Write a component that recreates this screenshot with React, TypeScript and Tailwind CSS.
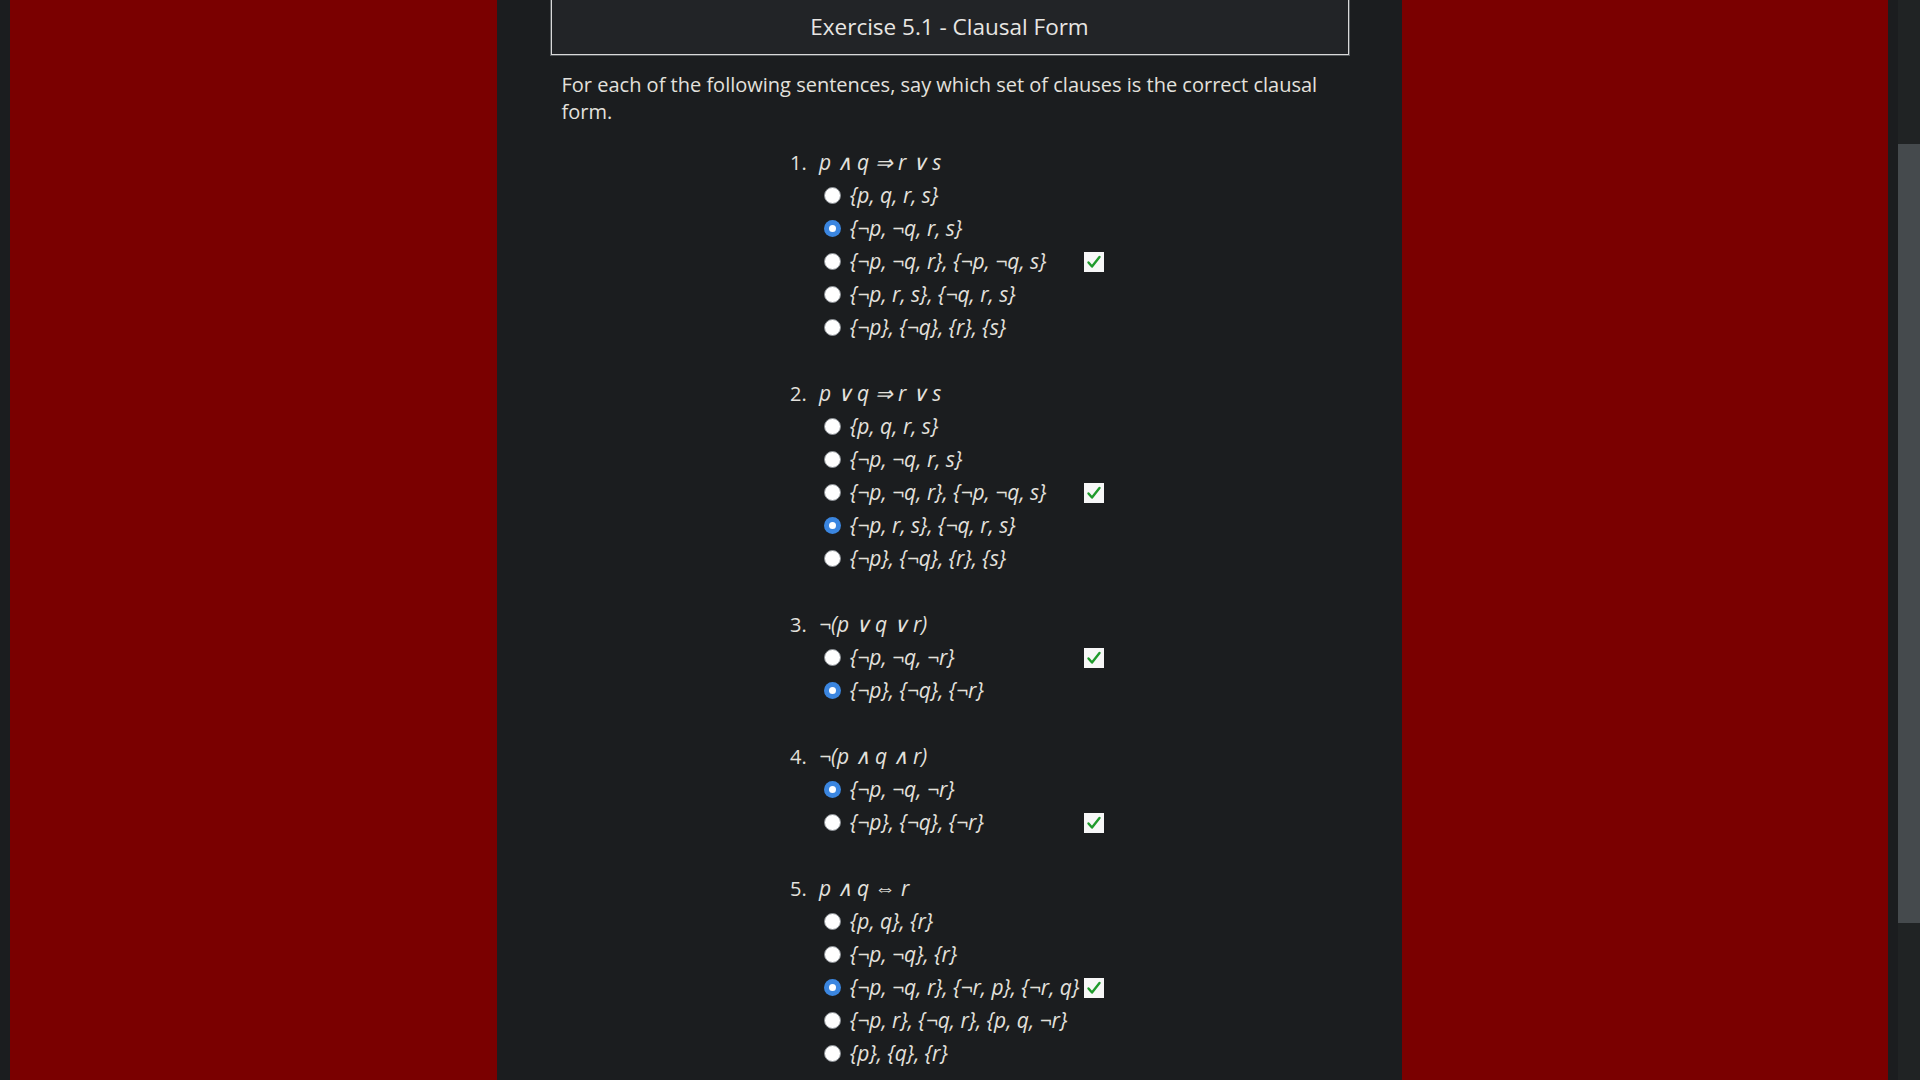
type Item = {
  formula: string;
  options: string[];
  selected: number;
  correct: number;
};

const items: Item[] = [
  {
    formula: 'p ∧ q ⇒ r ∨ s',
    options: ['{p, q, r, s}', '{¬p, ¬q, r, s}', '{¬p, ¬q, r}, {¬p, ¬q, s}', '{¬p, r, s}, {¬q, r, s}', '{¬p}, {¬q}, {r}, {s}'],
    selected: 1,
    correct: 2,
  },
  {
    formula: 'p ∨ q ⇒ r ∨ s',
    options: ['{p, q, r, s}', '{¬p, ¬q, r, s}', '{¬p, ¬q, r}, {¬p, ¬q, s}', '{¬p, r, s}, {¬q, r, s}', '{¬p}, {¬q}, {r}, {s}'],
    selected: 3,
    correct: 2,
  },
  {
    formula: '¬(p ∨ q ∨ r)',
    options: ['{¬p, ¬q, ¬r}', '{¬p}, {¬q}, {¬r}'],
    selected: 1,
    correct: 0,
  },
  {
    formula: '¬(p ∧ q ∧ r)',
    options: ['{¬p, ¬q, ¬r}', '{¬p}, {¬q}, {¬r}'],
    selected: 0,
    correct: 1,
  },
  {
    formula: 'p ∧ q ⇔ r',
    options: ['{p, q}, {r}', '{¬p, ¬q}, {r}', '{¬p, ¬q, r}, {¬r, p}, {¬r, q}', '{¬p, r}, {¬q, r}, {p, q, ¬r}', '{p}, {q}, {r}'],
    selected: 2,
    correct: 2,
  },
];

const Radio = ({ checked }: { checked: boolean }) =>
  checked ? (
    <span className="flex h-[17px] w-[17px] shrink-0 items-center justify-center rounded-full bg-[#3b86e0]">
      <span className="h-[7px] w-[7px] rounded-full bg-white" />
    </span>
  ) : (
    <span className="h-[17px] w-[17px] shrink-0 rounded-full border border-[#8a8f94] bg-white" />
  );

const Check = () => (
  <span className="flex h-[20px] w-[20px] shrink-0 items-center justify-center bg-[#f7f7f7]">
    <svg width="16" height="16" viewBox="0 0 16 16">
      <path d="M2.5 8.5 L6 12.5 L13.5 3" fill="none" stroke="#1f9a2c" strokeWidth="2.4" strokeLinecap="round" strokeLinejoin="round" />
    </svg>
  </span>
);

const Question = ({ item, n }: { item: Item; n: number }) => (
  <li className="mb-[33px]">
    <div className="flex h-[33px] items-center">
      <span className="w-[29px]">{n}.</span>
      <span className="text-[21px] italic">{item.formula}</span>
    </div>
    {item.options.map((opt, i) => (
      <div key={i} className="flex h-[33px] items-center pl-[34px]">
        <Radio checked={i === item.selected} />
        <span className="ml-[9px] w-[234px] whitespace-nowrap text-[21px] italic">{opt}</span>
        {i === item.correct && <Check />}
      </div>
    ))}
  </li>
);

const App = () => {
  return (
    <div
      className="flex h-screen w-full overflow-hidden bg-[#1b1d1f] text-[20px] leading-[27px] text-[#e3e1dd]"
      style={{ fontFamily: '"Open Sans", "Noto Sans", sans-serif' }}
    >
      <div className="w-[10px]" />
      <div className="w-[487px] bg-[#7a0000]" />
      <main className="flex flex-1 flex-col">
        <div className="mx-auto mt-[-4px] w-[800px] border border-[#55595c]">
          <div className="flex h-[58px] items-center justify-center border border-[#d9d9d9] bg-[#222427] text-[22.5px] text-[#e8e6e3]">
            Exercise 5.1 - Clausal Form
          </div>
        </div>
        <p className="mx-auto mt-[15px] w-[800px] px-[12px]">
          For each of the following sentences, say which set of clauses is the correct clausal form.
        </p>
        <ol className="ml-[293px] mt-[21px]">
          {items.map((item, i) => (
            <Question key={i} item={item} n={i + 1} />
          ))}
        </ol>
      </main>
      <div className="w-[486px] bg-[#7a0000]" />
      <div className="w-[10px]" />
      <div className="flex w-[22px] flex-col bg-[#202324]">
        <div className="h-[144px]" />
        <div className="h-[779px] bg-[#454a4d]" />
      </div>
    </div>
  );
};

export default App;
